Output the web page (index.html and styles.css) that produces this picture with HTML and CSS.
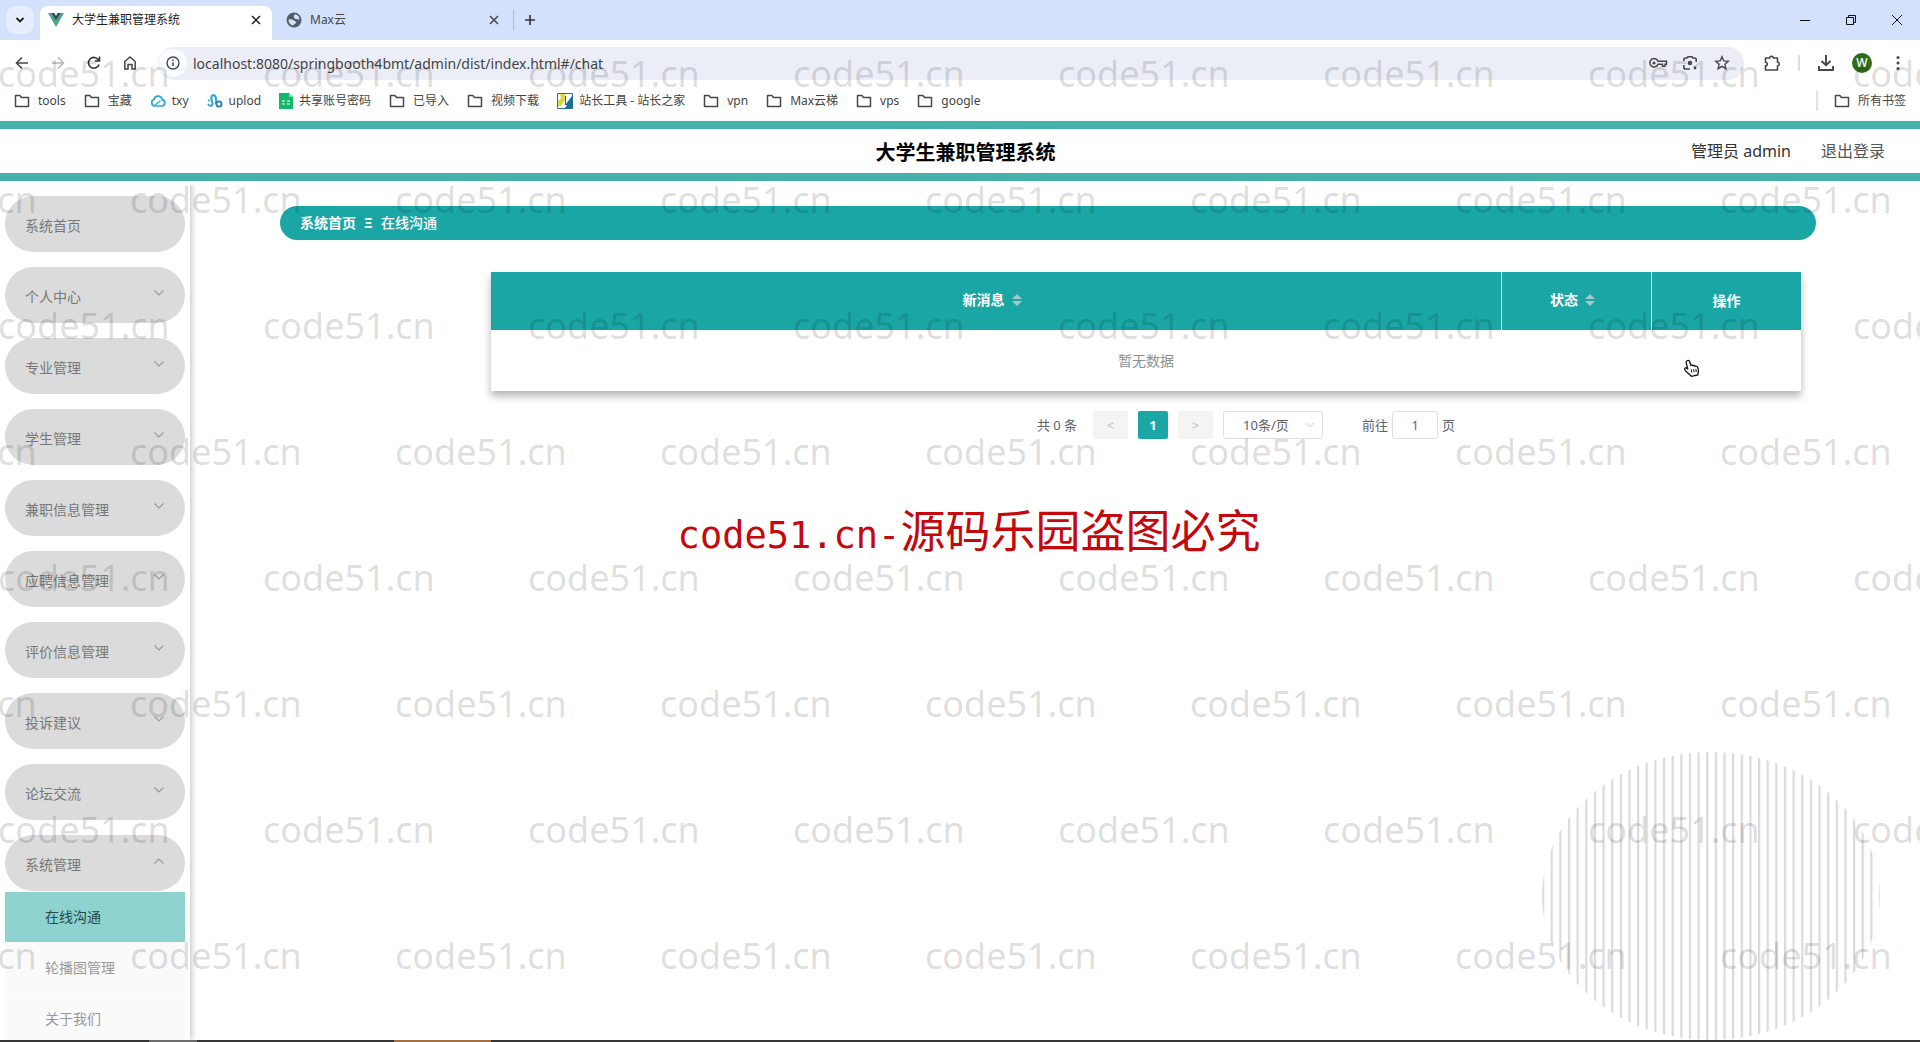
FILE: index.html
```html
<!DOCTYPE html>
<html lang="zh-CN">
<head>
<meta charset="utf-8">
<title>大学生兼职管理系统</title>
<link rel="stylesheet" href="styles.css">
</head>
<body>
<svg class="defs" aria-hidden="true">
  <symbol id="folder" viewBox="0 0 16 16"><path d="M1.500 2.500h4.300l1.700 2h7v9h-13z" fill="none" stroke="#474747" stroke-width="1.500" stroke-linejoin="round"/></symbol>
  <symbol id="down" viewBox="0 0 12 12"><path d="M1.500 3.500 6 8l4.500-4.500" fill="none" stroke="currentColor" stroke-width="1.100"/></symbol>
  <symbol id="close" viewBox="0 0 12 12"><path d="m2 2 8 8M10 2l-8 8" fill="none" stroke="currentColor" stroke-width="1.500"/></symbol>
  <symbol id="sort" viewBox="0 0 10 14"><path d="M5 1l5 5H0zM0 8h10l-5 5z" fill="#a9c6c9"/></symbol>
</svg>

<header class="browser">
  <div class="tabs">
    <button class="tab-search" aria-label="搜索标签页"><svg width="12" height="12" viewBox="0 0 12 12"><path d="m2.500 4 3.500 3.500L9.500 4" fill="none" stroke="#1f1f1f" stroke-width="1.800"/></svg></button>
    <div class="tab tab-active">
      <svg width="16" height="16" viewBox="0 0 16 16"><path d="M0 1h3.300L8 9l4.700-8H16L8 15z" fill="#41a883"/><path d="M3.300 1h3L8 4l1.700-3h3L8 9z" fill="#34495e"/></svg>
      <span class="tab-title">大学生兼职管理系统</span>
      <button class="tab-close" aria-label="关闭"><svg width="12" height="12"><use href="#close"/></svg></button>
    </div>
    <div class="tab">
      <svg width="16" height="16" viewBox="0 0 16 16"><circle cx="8" cy="8" r="7.500" fill="#565d66"/><path d="M8.500 2.500C11 2 13.500 4.500 13.500 7c-1.500 1-2 0-3 0S8.500 6.500 8 5.500s0-2 .500-3zM2.500 7.500c1.500-.500 4 0 5 .800s2 .700 2.500 1.700-.500 1.500-1.500 2-1 1.500-1.500 1.500C4 13 2.500 10.500 2.500 7.500z" fill="#d3e1fc"/></svg>
      <span class="tab-title">Max云</span>
      <button class="tab-close" aria-label="关闭"><svg width="12" height="12"><use href="#close"/></svg></button>
    </div>
    <button class="tab-new" aria-label="新标签页"><svg width="12" height="12" viewBox="0 0 12 12"><path d="M6 1v10M1 6h10" stroke="#333" stroke-width="1.600"/></svg></button>
    <div class="window-buttons">
      <button aria-label="最小化"><svg width="12" height="12" viewBox="0 0 12 12"><path d="M1 6.500h10" stroke="#111"/></svg></button>
      <button aria-label="还原"><svg width="12" height="12" viewBox="0 0 12 12"><path d="M1.500 3.500h7v7h-7zM3.500 3.500v-2h7v7h-2" fill="none" stroke="#111"/></svg></button>
      <button aria-label="关闭窗口"><svg width="12" height="12" viewBox="0 0 12 12"><path d="m1 1 10 10M11 1 1 11" stroke="#111"/></svg></button>
    </div>
  </div>

  <div class="toolbar">
    <button aria-label="后退"><svg width="16" height="16" viewBox="0 0 16 16"><path d="M14 8H3M8 2.500 2.500 8 8 13.500" fill="none" stroke="#474747" stroke-width="1.600"/></svg></button>
    <button aria-label="前进"><svg width="16" height="16" viewBox="0 0 16 16"><path d="M2 8h11M8 2.500 13.500 8 8 13.500" fill="none" stroke="#b8b8b8" stroke-width="1.600"/></svg></button>
    <button aria-label="重新加载"><svg width="16" height="16" viewBox="0 0 16 16"><path d="M13 9.500A5.400 5.400 0 1 1 12.500 5M13.500 1.500v4.500H9" fill="none" stroke="#333" stroke-width="1.600"/></svg></button>
    <button aria-label="主页"><svg width="16" height="16" viewBox="0 0 16 16"><path d="M2.800 6.500 8 2l5.200 4.500V14H10V9.500H6V14H2.800z" fill="none" stroke="#474747" stroke-width="1.500"/></svg></button>
    <div class="omnibox">
      <button class="site-info" aria-label="网站信息"><svg width="16" height="16" viewBox="0 0 16 16"><circle cx="8" cy="8" r="6" fill="none" stroke="#474747" stroke-width="1.400"/><path d="M8 7.200V11M8 4.600v1.500" stroke="#474747" stroke-width="1.500"/></svg></button>
      <input class="url" aria-label="地址" value="localhost:8080/springbooth4bmt/admin/dist/index.html#/chat">
      <button aria-label="密码"><svg width="20" height="16" viewBox="0 0 20 16"><path d="M10 6.300h8.500v3H17v2h-2.500v-2H10A4.200 4.200 0 1 1 10 6.300z" fill="none" stroke="#474747" stroke-width="1.500"/><circle cx="6" cy="8" r="1.600" fill="#474747"/></svg></button>
      <button aria-label="智能镜头"><svg width="16" height="16" viewBox="0 0 16 16"><path d="M1.800 6V4.500a1.500 1.500 0 0 1 1.500-1.500H5l1-1.300h4L11 3h1.700a1.500 1.500 0 0 1 1.500 1.500V7M1.800 10v2.500A1.500 1.500 0 0 0 3.300 14H8" fill="none" stroke="#474747" stroke-width="1.600"/><circle cx="8" cy="8" r="2.300" fill="#474747"/><circle cx="13" cy="13" r="1.400" fill="#474747"/></svg></button>
      <button aria-label="收藏"><svg width="16" height="16" viewBox="0 0 16 16"><path d="m8 1.800 1.800 4.100 4.500.400-3.400 3 1 4.400L8 11.400l-3.900 2.300 1-4.400-3.400-3 4.500-.400z" fill="none" stroke="#474747" stroke-width="1.400"/></svg></button>
    </div>
    <button aria-label="扩展程序"><svg width="18" height="18" viewBox="0 0 18 18"><path d="M2.500 4h4.200c0-2.300 3.600-2.300 3.600 0h4.200v4.200c2.300 0 2.300 3.600 0 3.600V16h-12v-4.200c2.300 0 2.300-3.600 0-3.600z" fill="none" stroke="#474747" stroke-width="1.600" stroke-linejoin="round"/></svg></button>
    <span class="rule"></span>
    <button aria-label="下载"><svg width="18" height="18" viewBox="0 0 18 18"><path d="M9 1v10M4.500 7 9 11.300 13.500 7M2 12v4h14v-4" fill="none" stroke="#474747" stroke-width="1.900"/></svg></button>
    <button aria-label="账户"><span class="avatar">W</span></button>
    <button aria-label="菜单"><svg width="16" height="16" viewBox="0 0 16 16" fill="#474747"><circle cx="8" cy="2.500" r="1.500"/><circle cx="8" cy="8" r="1.500"/><circle cx="8" cy="13.500" r="1.500"/></svg></button>
  </div>

  <nav class="bookmarks" aria-label="书签栏">
    <a href="#"><svg width="16" height="16"><use href="#folder"/></svg>tools</a>
    <a href="#"><svg width="16" height="16"><use href="#folder"/></svg>宝藏</a>
    <a href="#" class="site"><svg width="16" height="16" viewBox="0 0 16 16"><path d="M4.500 13a3.500 3.500 0 0 1-.500-6.700 4.200 4.200 0 0 1 8.200.400A3.200 3.200 0 0 1 12 13z" fill="none" stroke="#27a5dc" stroke-width="1.700"/><path d="m4.500 12.500 6-5" stroke="#27b8d0" stroke-width="1.600"/></svg>txy</a>
    <a href="#" class="site"><svg width="16" height="16" viewBox="0 0 16 16"><path d="M1 11c2 3 5 2 4.500-1S3 5 5 3s4 0 4 3v5" fill="none" stroke="#2da8d8" stroke-width="2"/><circle cx="12" cy="11" r="2.600" fill="none" stroke="#1d83b8" stroke-width="1.800"/><circle cx="2" cy="7.500" r="1.300" fill="#56c6df"/></svg>uplod</a>
    <a href="#" class="site"><svg width="14" height="16" viewBox="0 0 14 16"><path d="M0 0h10l4 4v12H0z" fill="#12b76a"/><path d="M10 0l4 4h-4z" fill="#7ddcae"/><path d="M3 8h3M8 8h3M3 11h3M8 11h3" stroke="#fff"/></svg>共享账号密码</a>
    <a href="#"><svg width="16" height="16"><use href="#folder"/></svg>已导入</a>
    <a href="#"><svg width="16" height="16"><use href="#folder"/></svg>视频下载</a>
    <a href="#" class="site"><svg width="16" height="16" viewBox="0 0 16 16"><path d="M.500.500h15v15H.500z" fill="#fff" stroke="#24748c"/><path d="M3 1h5v6l-4 6H1V8l3-3z" fill="#dfd640"/><path d="M9 3v8l6-8v12H8l2-3H8V3z" fill="#1c6d9d"/></svg>站长工具 - 站长之家</a>
    <a href="#"><svg width="16" height="16"><use href="#folder"/></svg>vpn</a>
    <a href="#"><svg width="16" height="16"><use href="#folder"/></svg>Max云梯</a>
    <a href="#"><svg width="16" height="16"><use href="#folder"/></svg>vps</a>
    <a href="#"><svg width="16" height="16"><use href="#folder"/></svg>google</a>
    <a href="#" class="all-bookmarks"><svg width="16" height="16"><use href="#folder"/></svg>所有书签</a>
  </nav>
</header>

<div class="app-header">
  <h1>大学生兼职管理系统</h1>
  <div class="account"><span>管理员 admin</span><a href="#">退出登录</a></div>
</div>

<div class="app-body">
  <nav class="sidebar" aria-label="主菜单">
    <ul class="menu">
      <li><button class="menu-item"><span>系统首页</span></button></li>
      <li><button class="menu-item"><span>个人中心</span><svg width="12" height="12"><use href="#down"/></svg></button></li>
      <li><button class="menu-item"><span>专业管理</span><svg width="12" height="12"><use href="#down"/></svg></button></li>
      <li><button class="menu-item"><span>学生管理</span><svg width="12" height="12"><use href="#down"/></svg></button></li>
      <li><button class="menu-item"><span>兼职信息管理</span><svg width="12" height="12"><use href="#down"/></svg></button></li>
      <li><button class="menu-item"><span>应聘信息管理</span><svg width="12" height="12"><use href="#down"/></svg></button></li>
      <li><button class="menu-item"><span>评价信息管理</span><svg width="12" height="12"><use href="#down"/></svg></button></li>
      <li><button class="menu-item"><span>投诉建议</span><svg width="12" height="12"><use href="#down"/></svg></button></li>
      <li><button class="menu-item"><span>论坛交流</span><svg width="12" height="12"><use href="#down"/></svg></button></li>
      <li>
        <button class="menu-item open" aria-expanded="true"><span>系统管理</span><svg width="12" height="12"><use href="#down"/></svg></button>
        <ul class="submenu">
          <li><a href="#" class="current">在线沟通</a></li>
          <li><a href="#">轮播图管理</a></li>
          <li><a href="#">关于我们</a></li>
        </ul>
      </li>
    </ul>
  </nav>

  <main class="content">
    <nav class="breadcrumb" aria-label="面包屑"><a href="#">系统首页</a><span class="sep">Ξ</span><span>在线沟通</span></nav>
    <section class="list">
      <table>
        <colgroup><col><col class="narrow"><col class="narrow"></colgroup>
        <thead>
          <tr>
            <th><span class="th-inner">新消息<button class="sort" aria-label="排序"><svg width="10" height="14"><use href="#sort"/></svg></button></span></th>
            <th><span class="th-inner">状态<button class="sort" aria-label="排序"><svg width="10" height="14"><use href="#sort"/></svg></button></span></th>
            <th>操作</th>
          </tr>
        </thead>
        <tbody><tr><td colspan="3">暂无数据</td></tr></tbody>
      </table>
      <div class="pagination">
        <span>共 0 条</span>
        <button class="step prev" disabled>&lt;</button>
        <button class="page">1</button>
        <button class="step" disabled>&gt;</button>
        <span class="select"><select aria-label="每页条数"><option>10条/页</option></select><svg width="10" height="10"><use href="#down"/></svg></span>
        <label class="jump">前往<input value="1">页</label>
      </div>
    </section>
    <svg class="stripes" viewBox="0 0 338 288" aria-hidden="true">
      <defs>
        <pattern id="bars" width="8.640" height="288" patternUnits="userSpaceOnUse" x="0"><rect width="2.200" height="288" fill="#dadada"/></pattern>
      </defs>
      <ellipse cx="169" cy="144" rx="169" ry="144" fill="url(#bars)"/>
    </svg>
    <svg class="pointer" width="18" height="18" viewBox="0 0 18 18" aria-hidden="true"><path d="M4.500 1.500c1-.500 1.800.200 2.100 1.200l1.300 3.600c.800-.700 1.700-.400 2.100.400.900-.600 1.700-.200 2.200.600 1-.500 2 0 2.500 1.200.900 2.300 1 4 .300 5.700l-.200 1.800-6.300 1.300L4 13.200C2.500 12 1.200 10.500 1.800 9.500s1.700-.700 3 .700L3.300 4.200c-.400-1.200.200-2.200 1.200-2.700z" fill="#fff" stroke="#111" stroke-width="1.300"/><path d="m8.300 10.500.400 3M10.600 10.200l.400 3M12.900 10l.300 3" stroke="#111"/></svg>
  </main>
</div>

<footer class="taskbar"><span class="task task-start"></span><span class="task task-open"></span></footer>

<div class="watermark" aria-hidden="true">
  <div class="row"><span>code51.cn</span><span>code51.cn</span><span>code51.cn</span><span>code51.cn</span><span>code51.cn</span><span>code51.cn</span><span>code51.cn</span><span>code51.cn</span></div>
  <div class="row shifted"><span>code51.cn</span><span>code51.cn</span><span>code51.cn</span><span>code51.cn</span><span>code51.cn</span><span>code51.cn</span><span>code51.cn</span></div>
  <div class="row"><span>code51.cn</span><span>code51.cn</span><span>code51.cn</span><span>code51.cn</span><span>code51.cn</span><span>code51.cn</span><span>code51.cn</span><span>code51.cn</span></div>
  <div class="row shifted"><span>code51.cn</span><span>code51.cn</span><span>code51.cn</span><span>code51.cn</span><span>code51.cn</span><span>code51.cn</span><span>code51.cn</span></div>
  <div class="row"><span>code51.cn</span><span>code51.cn</span><span>code51.cn</span><span>code51.cn</span><span>code51.cn</span><span>code51.cn</span><span>code51.cn</span><span>code51.cn</span></div>
  <div class="row shifted"><span>code51.cn</span><span>code51.cn</span><span>code51.cn</span><span>code51.cn</span><span>code51.cn</span><span>code51.cn</span><span>code51.cn</span></div>
  <div class="row"><span>code51.cn</span><span>code51.cn</span><span>code51.cn</span><span>code51.cn</span><span>code51.cn</span><span>code51.cn</span><span>code51.cn</span><span>code51.cn</span></div>
  <div class="row shifted"><span>code51.cn</span><span>code51.cn</span><span>code51.cn</span><span>code51.cn</span><span>code51.cn</span><span>code51.cn</span><span>code51.cn</span></div>
</div>
<p class="notice"><span class="notice-latin">code51.cn-</span>源码乐园盗图必究</p>
</body>
</html>
```
FILE: styles.css
```css
* { box-sizing: border-box; }
body {
  margin: 0;
  height: 100vh;
  display: flex;
  flex-direction: column;
  overflow: hidden;
  position: relative;
  background: #fff;
  color: #333;
  font: 14px/20px "Noto Sans", "Noto Sans CJK SC", sans-serif;
}
button, input, select { font: inherit; color: inherit; border: 0; background: none; padding: 0; margin: 0; }
a { color: inherit; text-decoration: none; }
ul { list-style: none; margin: 0; padding: 0; }
svg { flex: none; display: block; }
.defs { position: absolute; width: 0; height: 0; }

/* browser frame */
.browser { flex: none; }
.tabs { display: flex; align-items: flex-end; height: 40px; background: #d3e1fc; padding-left: 6px; font-size: 12px; }
.tab-search { width: 28px; height: 28px; margin: 0 6px 6px 0; border-radius: 10px; background: #e6eefd; display: grid; place-items: center; }
.tab { display: flex; align-items: center; width: 232px; height: 34px; padding: 0 10px 6px 8px; gap: 8px; color: #474747; }
.tab + .tab { width: 241px; padding: 0 13px 6px 14px; }
.tab-active { background: #fff; border-radius: 8px 8px 0 0; color: #1f1f1f; }
.tab-title { flex: 1; }
.tab-close { display: grid; place-items: center; width: 12px; height: 20px; }
.tab-new { width: 33px; height: 20px; margin-bottom: 10px; display: grid; place-items: center; border-left: 1px solid #a9bde3; }
.window-buttons { display: flex; margin-left: auto; height: 40px; }
.window-buttons button { width: 46px; display: grid; place-items: center; }

.toolbar { display: flex; align-items: center; height: 46px; padding: 0 4px; }
.toolbar button { width: 36px; height: 32px; display: grid; place-items: center; flex: none; }
.omnibox { flex: 1; display: flex; align-items: center; height: 33px; margin: 0 10px; padding-right: 6px; border-radius: 17px; background: #ebeef7; }
.omnibox button { width: 32px; }
.omnibox .site-info { width: 28px; height: 28px; margin-left: 1px; border-radius: 14px; background: #fafbfe; }
.url { flex: 1; min-width: 0; padding-left: 6px; height: 24px; font-size: 14px; color: #444; }
.rule { width: 2px; height: 16px; margin: 0 8px; background: #d6e0f2; }
.avatar { width: 20px; height: 20px; border-radius: 10px; background: #2f6b1c; color: #fff; font-size: 12px; font-weight: 500; }

.bookmarks { display: flex; align-items: center; gap: 18px; height: 35px; padding: 0 14px 5px; font-size: 12px; color: #444; }
.bookmarks a { display: flex; align-items: center; gap: 8px; }
.bookmarks .site { gap: 6px; }
.bookmarks .all-bookmarks { margin-left: auto; height: 20px; padding-left: 16px; border-left: 2px solid #dae3f3; }

/* application header */
.app-header {
  flex: none;
  display: grid;
  grid-template-columns: 1fr auto 1fr;
  align-items: center;
  height: 60px;
  padding: 0 35px 0 46px;
  border: solid #48b0aa;
  border-width: 8px 0;
}
.app-header h1 { grid-column: 2; margin: 0; padding-top: 4px; font-size: 20px; line-height: 30px; font-weight: 700; color: #000; }
.account { justify-self: end; display: flex; gap: 30px; font-size: 16px; }
.account a { color: #555; }

.app-body { flex: 1; min-height: 0; display: flex; }

/* sidebar */
.sidebar { flex: none; width: 190px; padding: 0 5px; overflow: hidden; box-shadow: 2px 0 6px rgba(0, 0, 0, .22); clip-path: inset(4px -12px 0 0); }
.menu-item {
  display: flex;
  align-items: center;
  justify-content: space-between;
  width: 100%;
  height: 56px;
  margin-top: 15px;
  padding: 0 20px;
  border-radius: 28px;
  background: #dbdbdb;
  color: #777;
}
.menu-item span { padding-top: 4px; }
.menu-item svg { margin-bottom: 4px; color: #999; }
.menu-item.open svg { transform: rotate(180deg); }
.submenu { padding-top: 1px; }
.submenu a { display: block; height: 50px; margin-bottom: 1px; padding-left: 40px; line-height: 50px; background: #fafafa; color: #999; }
.submenu .current { background: #8ed3d0; color: #25494a; }

/* content */
.content { flex: 1; min-width: 0; position: relative; padding: 25px 104px 0 90px; }
.breadcrumb { display: flex; align-items: center; height: 34px; padding: 0 20px; border-radius: 17px; background: #1ba6a6; color: #fff; font-weight: 500; }
.breadcrumb a { font-weight: 700; }
.sep { width: 25px; text-align: center; font-weight: 700; }
.list { margin: 32px 15px 0 211px; }
table { width: 100%; table-layout: fixed; border-collapse: separate; border-spacing: 0; box-shadow: 0 5px 8px rgba(0, 0, 0, .3); }
.narrow { width: 150px; }
th { height: 58px; padding: 0; background: #1ba6a6; color: #fff; font-weight: 700; text-align: center; }
th + th { border-left: 1px solid #dff1f0; }
.th-inner { display: inline-flex; align-items: center; gap: 7px; padding: 0 8px 2px 0; vertical-align: middle; }
.sort { display: block; }
td { height: 61px; padding: 0; background: #fff; color: #8c8f94; text-align: center; }

.pagination { display: flex; align-items: center; justify-content: center; height: 28px; margin-top: 20px; padding-left: 200px; font-size: 13px; color: #606266; }
.step { width: 35px; height: 28px; background: #f4f4f5; border-radius: 2px; color: #b9bcc2; }
.prev { margin-left: 16px; }
.page { width: 30px; height: 28px; margin: 0 10px; border-radius: 2px; background: #1ba6a6; color: #fff; font-weight: 700; }
.select { display: flex; align-items: center; width: 100px; height: 28px; margin-left: 10px; padding-right: 7px; border: 1px solid #dcdfe6; border-radius: 3px; color: #c0c4cc; }
.select select { appearance: none; flex: 1; min-width: 0; height: 26px; padding-left: 19px; color: #606266; }
.jump { display: flex; align-items: center; gap: 4px; margin-left: 39px; }
.jump input { width: 46px; height: 28px; border: 1px solid #dcdfe6; border-radius: 3px; text-align: center; }

.stripes { position: absolute; right: 40px; bottom: 0; width: 338px; height: 288px; }
.pointer { position: absolute; right: 219px; top: 178px; }

.taskbar { flex: none; display: flex; height: 2px; background: #353535; }
.task { width: 48px; background: #6c6c6c; margin-left: 149px; }
.task-open { width: 97px; margin-left: 197px; background: #a5703f; }

/* overlays */
.watermark { position: absolute; inset: 51px 0 0 -2px; overflow: hidden; pointer-events: none; color: rgba(0, 0, 0, .15); font-size: 36px; line-height: 46px; }
.row { display: grid; grid-template-columns: repeat(8, 265px); height: 126px; }
.shifted { grid-template-columns: repeat(7, 265px); }
.row.shifted { margin-left: 132px; }
.row.shifted::before { content: "code51.cn"; position: absolute; left: -133px; }
.notice { position: absolute; left: 0; right: 0; top: 499px; margin: 0; padding-left: 18px; text-align: center; color: #c4080c; font-family: "Noto Sans CJK SC", sans-serif; font-size: 45px; line-height: 60px; pointer-events: none; }
.notice-latin { font-family: "DejaVu Sans Mono", monospace; font-size: 37px; }
```
